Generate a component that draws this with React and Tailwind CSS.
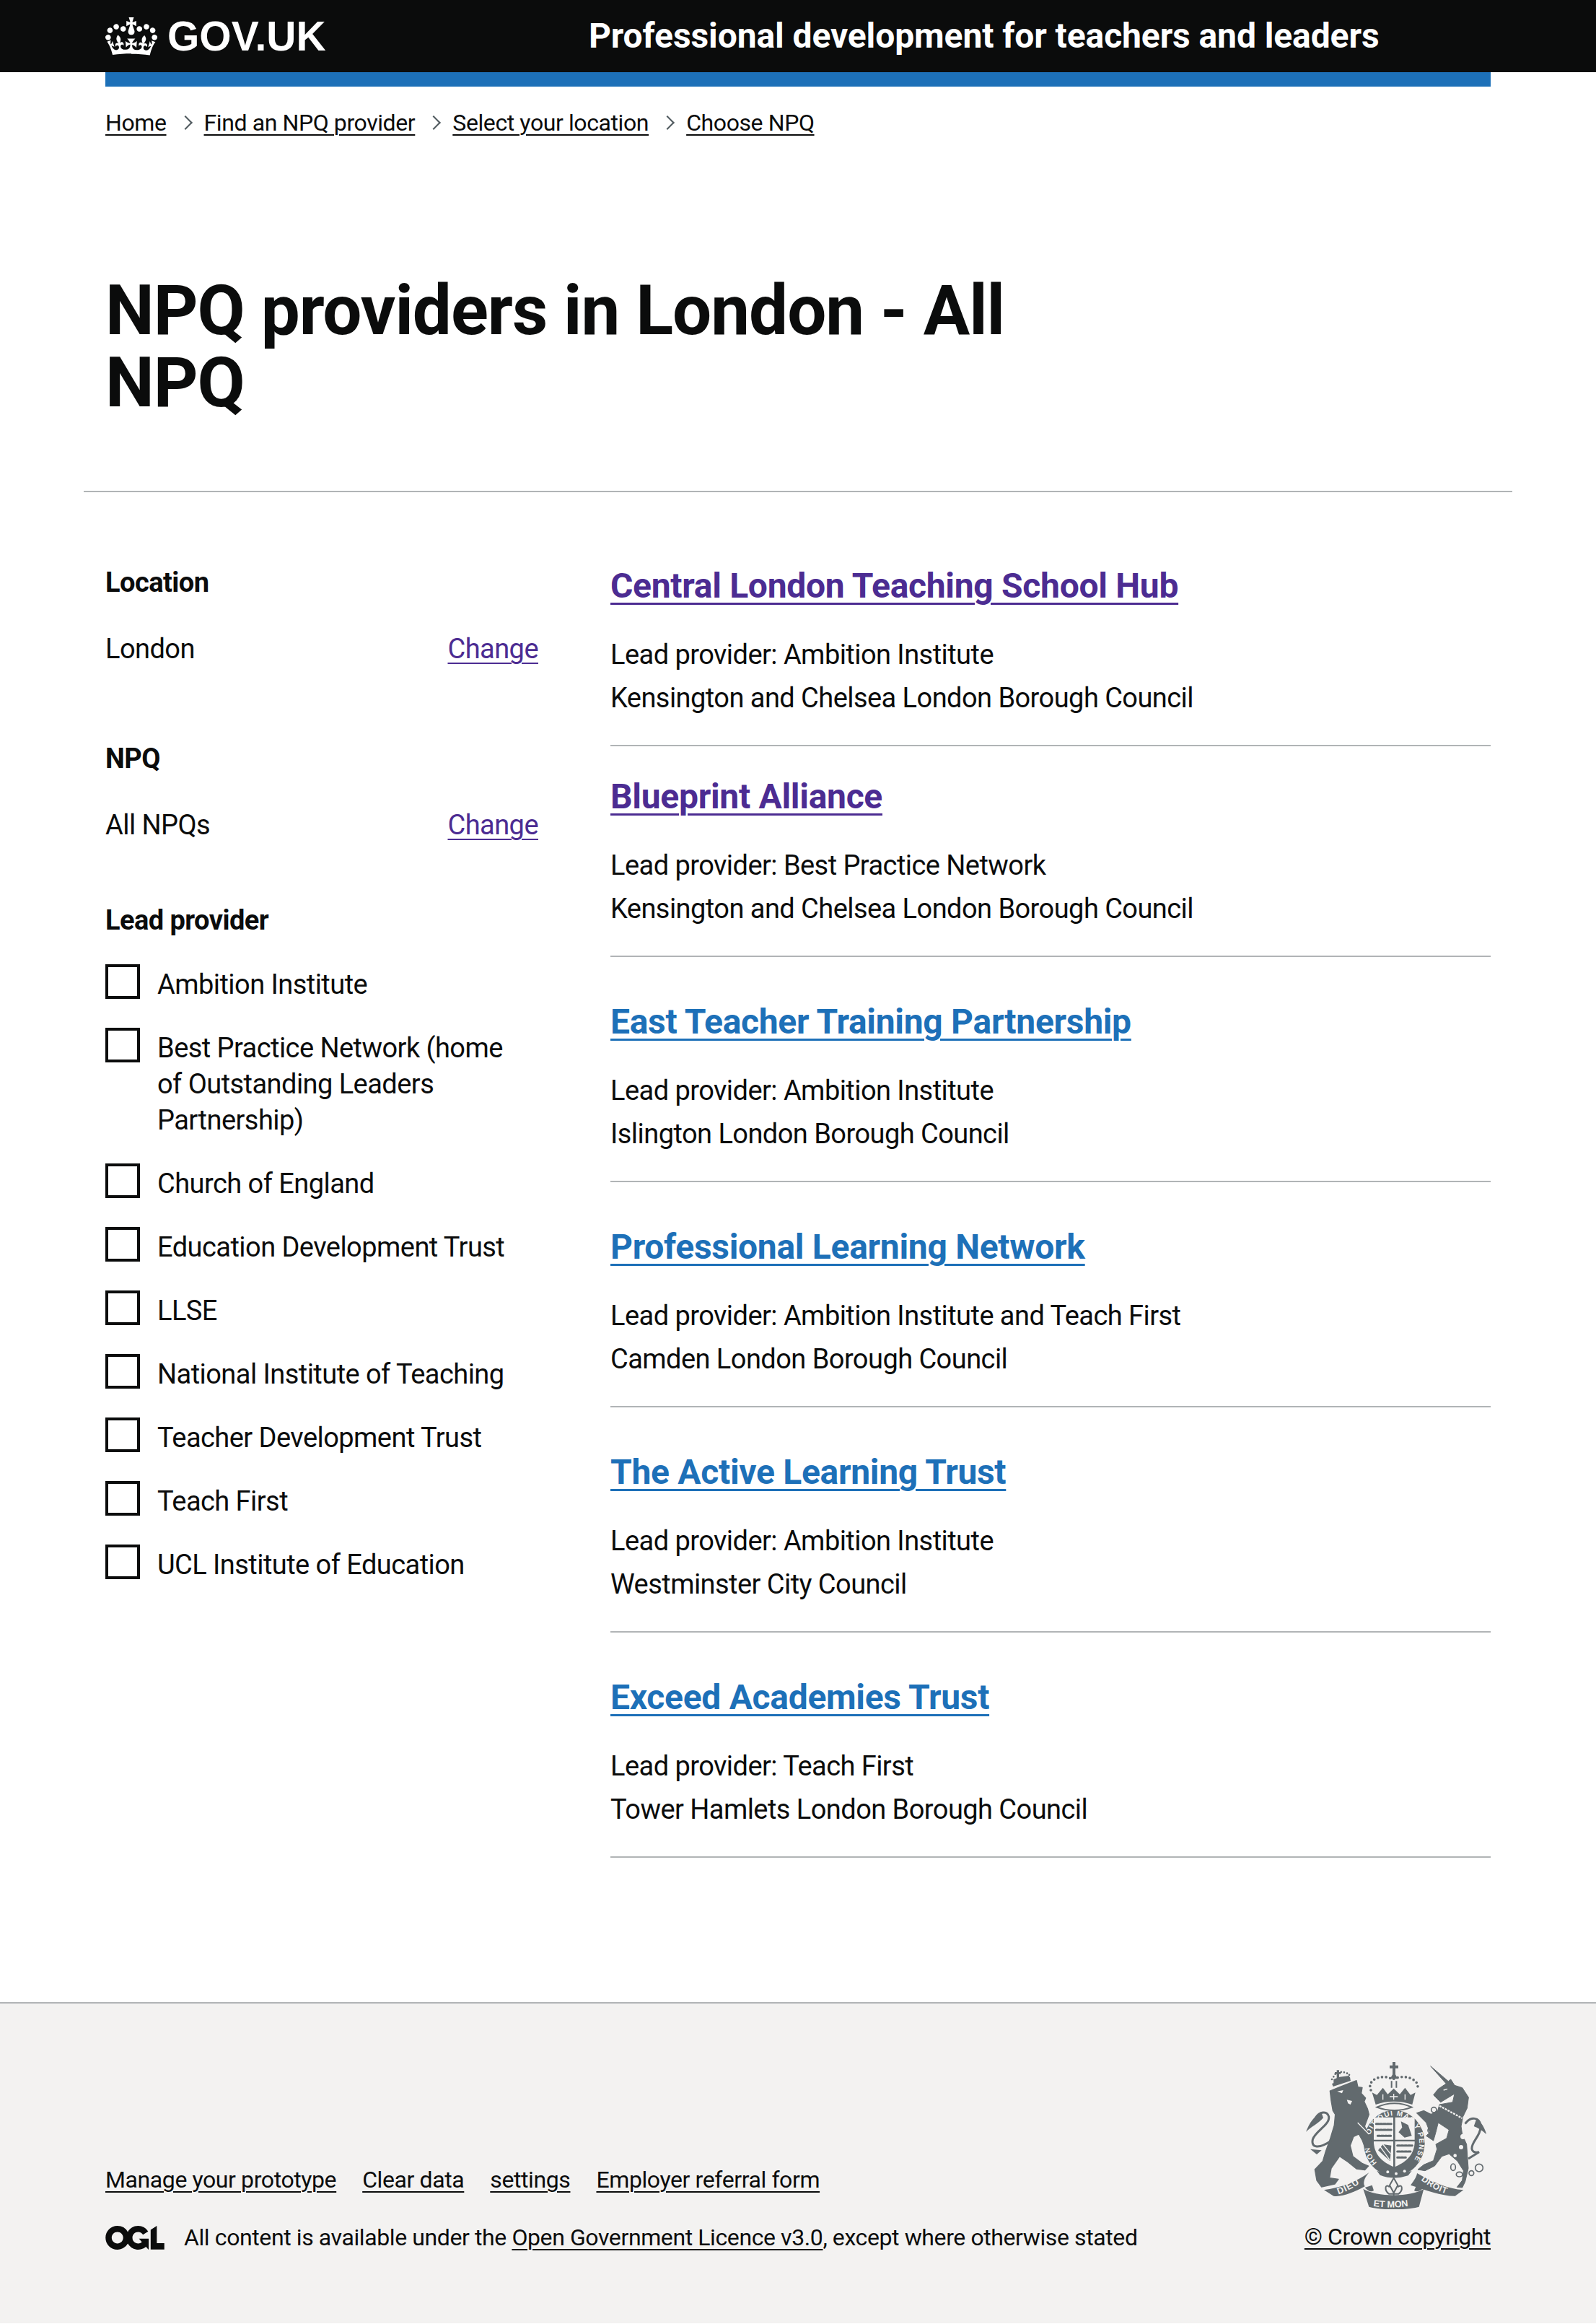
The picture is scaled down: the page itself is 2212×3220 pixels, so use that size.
const crownPath = "M25 30.2c3.5 1.5 7.7-.2 9.1-3.7 1.5-3.6-.2-7.8-3.9-9.2-3.6-1.4-7.6.3-9.1 3.9-1.4 3.5.3 7.5 3.9 9zM9 39.5c3.6 1.5 7.8-.2 9.2-3.7 1.5-3.6-.2-7.8-3.9-9.1-3.6-1.5-7.6.2-9.1 3.8-1.4 3.5.3 7.5 3.8 9zM4.4 57.2c3.5 1.5 7.7-.2 9.1-3.8 1.5-3.6-.2-7.7-3.9-9.1-3.5-1.5-7.6.3-9.1 3.8-1.4 3.5.3 7.6 3.9 9.1zm38.3-21.4c3.5 1.5 7.7-.2 9.1-3.8 1.5-3.6-.2-7.7-3.9-9.1-3.6-1.5-7.6.3-9.1 3.8-1.3 3.6.4 7.7 3.9 9.1zm64.4-5.6c-3.6 1.5-7.8-.2-9.1-3.7-1.5-3.6.2-7.8 3.8-9.2 3.6-1.4 7.7.3 9.2 3.9 1.3 3.5-.4 7.5-3.9 9zm15.9 9.3c-3.6 1.5-7.7-.2-9.1-3.7-1.5-3.6.2-7.8 3.7-9.1 3.6-1.5 7.7.2 9.2 3.8 1.5 3.5-.3 7.5-3.8 9zm4.7 17.7c-3.6 1.5-7.8-.2-9.2-3.8-1.5-3.6.2-7.7 3.9-9.1 3.6-1.5 7.7.3 9.2 3.8 1.3 3.5-.4 7.6-3.9 9.1zM89.3 35.8c-3.6 1.5-7.8-.2-9.2-3.8-1.4-3.6.2-7.7 3.9-9.1 3.6-1.5 7.7.3 9.2 3.8 1.4 3.6-.3 7.7-3.9 9.1zM69.7 17.7l8.9 4.7V9.3l-8.9 2.8c-.2-.3-.5-.6-.9-.9L72.4 0H59.6l3.6 11.2c-.3.3-.6.5-.9.9l-8.8-2.8v13.1l8.8-4.7c.3.3.6.7.9.9l-5 15.4v.1c-.2.8-.4 1.6-.4 2.4 0 4.1 3.1 7.5 7 8.1h.2c.3 0 .7.1 1 .1.4 0 .7 0 1-.1h.2c4-.6 7.1-4.1 7.1-8.1 0-.8-.1-1.7-.4-2.4V34l-5.1-15.4c.4-.2.7-.6 1-.9zM66 92.8c16.9 0 32.8 1.1 47.1 3.2 4-16.9 8.9-26.7 14-33.5l-9.6-3.4c1 4.9 1.1 7.2 0 10.2-1.5-1.4-3-4.3-4.2-8.7L108.6 76c2.8-2 5-3.2 7.5-3.3-4.4 9.4-10 11.9-13.6 11.2-4.3-.8-6.3-4.6-5.6-7.9 1-4.7 5.7-5.9 8-.5 4.3-8.7-3-11.4-7.6-8.8 7.1-7.2 7.9-13.5 2.1-21.1-8 6.1-8.1 12.3-4.5 20.8-4.7-5.4-12.1-2.5-9.5 6.2 3.4-5.2 7.9-2 7.2 3.1-.6 4.3-6.4 7.8-13.5 7.2-10.3-.9-10.9-8-11.2-13 2.5-.5 7.1 1.8 11 7.3L80.2 60c-4.1 4.4-8 5.3-12.3 5.4 1.4-4.4 8-11.6 8-11.6H55.5s6.4 7.2 7.9 11.6c-4.2-.1-8-1-12.3-5.4l1.4 16.4c3.9-5.5 8.5-7.7 10.9-7.3-.3 5-.7 12.1-11 13-7.2.6-12.9-2.9-13.5-7.2-.7-5 3.8-8.3 7.1-3.1 2.7-8.7-4.6-11.6-9.4-6.2 3.7-8.5 3.6-14.7-4.6-20.8-5.8 7.6-5 13.9 2.2 21.1-4.7-2.6-11.9.1-7.7 8.8 2.3-5.5 7.1-4.2 8.1.5.7 3.3-1.3 7.1-5.7 7.9-3.5.7-9-1.8-13.5-11.2 2.5.1 4.7 1.3 7.5 3.3l-4.7-15.4c-1.2 4.4-2.7 7.2-4.3 8.7-1.1-3-.9-5.3 0-10.2l-9.5 3.4c5 6.9 9.9 16.7 14 33.5 14.8-2.1 30.8-3.2 47.7-3.2z";
const oglPath = "M421.5 142.8V.1l-50.7 32.3v161.1h112.4v-50.7zm-122.3-9.6A47.12 47.12 0 0 1 221 97.8c0-26 21.1-47.1 47.1-47.1 16.7 0 31.4 8.7 39.7 21.8l42.7-27.2A97.63 97.63 0 0 0 268.1 0c-36.5 0-68.3 20.1-85.1 49.7A98 98 0 0 0 97.8 0C43.9 0 0 43.9 0 97.8s43.9 97.8 97.8 97.8c36.5 0 68.3-20.1 85.1-49.7a97.76 97.76 0 0 0 149.6 25.4l19.4 22.2h3v-87.8h-80l24.3 27.5zM97.8 145c-26 0-47.1-21.1-47.1-47.1s21.1-47.1 47.1-47.1 47.2 21 47.2 47S123.8 145 97.8 145";

const crumbs = ["Home", "Find an NPQ provider", "Select your location", "Choose NPQ"];

const providers = [
  { name: "Central London Teaching School Hub", lead: "Ambition Institute", council: "Kensington and Chelsea London Borough Council", visited: true },
  { name: "Blueprint Alliance", lead: "Best Practice Network", council: "Kensington and Chelsea London Borough Council", visited: true },
  { name: "East Teacher Training Partnership", lead: "Ambition Institute", council: "Islington London Borough Council" },
  { name: "Professional Learning Network", lead: "Ambition Institute and Teach First", council: "Camden London Borough Council" },
  { name: "The Active Learning Trust", lead: "Ambition Institute", council: "Westminster City Council" },
  { name: "Exceed Academies Trust", lead: "Teach First", council: "Tower Hamlets London Borough Council" },
];

const leadProviders = [
  "Ambition Institute",
  "Best Practice Network (home of Outstanding Leaders Partnership)",
  "Church of England",
  "Education Development Trust",
  "LLSE",
  "National Institute of Teaching",
  "Teacher Development Trust",
  "Teach First",
  "UCL Institute of Education",
];

function Crest() {
  const bg = "#f3f2f1";
  const ink = "#626a6e";
  const crestFont = "Liberation Sans, sans-serif";
  return (
    <svg viewBox="150 75 750 615" className="w-[250px] h-[205px] block" fill={ink}>
      <defs>
        <path id="ring" d="M445 497 A104 114 0 1 1 589 497" />
        <path id="dieu" d="M285 628 Q340 610 392 568" />
        <path id="droit" d="M628 568 Q680 612 748 630" />
        <path id="etmon" d="M430 677 Q515 690 605 672" />
      </defs>
      {/* shield and garter */}
      <ellipse cx="517" cy="415" rx="127" ry="137" />
      <text fontFamily={crestFont} fontWeight="700" fontSize="30" fill={bg}>
        <textPath href="#ring" textLength="505" lengthAdjust="spacing">HONI SOIT QUI MAL Y PENSE</textPath>
      </text>
      <path d="M432 308 H602 V415 C598 470 560 497 517 515 C474 497 436 470 432 415 Z" fill={bg} />
      <path d="M430 401 H513 V306 H521 V401 H604 V408 H521 V518 H513 V408 H430 Z" />
      <g fill="none" stroke={ink} strokeLinecap="round">
        <path d="M442 335 H505 M442 360 H505 M448 385 H505" strokeWidth="9" strokeDasharray="10 5" />
        <path d="M530 425 H592 M530 450 H585 M530 475 H565" strokeWidth="9" strokeDasharray="10 5" />
      </g>
      <path d="M545 325 L575 340 L590 385 L560 392 L535 370 L550 350 Z M470 420 L505 425 L500 490 L450 445 Z" />
      <path d="M455 425 L498 485 M470 420 L502 460" stroke={bg} strokeWidth="4" fill="none" />
      <path d="M445 530 Q517 560 590 530 L575 550 Q517 570 458 548 Z" />
      <circle cx="490" cy="535" r="6" fill={bg} /><circle cx="525" cy="542" r="6" fill={bg} /><circle cx="560" cy="532" r="6" fill={bg} />

      {/* lion */}
      <path d="M250 198 L300 178 L360 155 L366 182 L384 184 L380 208 L398 228 L392 242 L406 272 L412 296 L394 345 L418 395 L424 432 L396 436 L385 405 L370 378 L348 388 L334 425 L345 470 L385 500 L410 510 L395 527 L360 522 L320 490 L290 470 L255 520 L248 560 L285 565 L270 585 L215 597 L195 570 L187 525 L220 490 L232 450 L250 400 L268 340 L272 296 L262 280 L255 240 Z" strokeLinejoin="round" stroke={ink} strokeWidth="4" />
      <path d="M365 330 L412 378" stroke={bg} strokeWidth="4" fill="none" />
      <path d="M255 405 C205 440 170 435 178 400 C188 365 250 340 245 305 C238 278 205 285 190 310" fill="none" stroke={ink} strokeWidth="9" />
      <path d="M215 290 C185 300 165 330 150 368 C175 345 200 335 222 310 Z" />
      <path d="M168 440 L215 445 L195 462 Z" />
      <path d="M280 200 L305 195 L300 208 Z M320 235 L342 240 L335 255 L325 250 Z" fill={bg} />
      {/* lion crown */}
      <path d="M258 150 L272 128 L300 118 L330 128 L330 150" fill="none" stroke={ink} strokeWidth="8" strokeDasharray="0 13" strokeLinecap="round" />
      <path d="M278 112 H288 V120 H295 V128 H288 V150 H278 V128 H270 V120 H278 Z" />
      <path d="M265 150 L290 140 L330 135 L332 150 L265 172 Z" />
      <path d="M258 168 L333 144 L336 156 L263 180 Z" />

      {/* top crown */}
      <path d="M510 78 H522 V92 H534 V104 H522 V130 L532 148 H500 L510 130 V104 H498 V92 H510 Z" />
      <path d="M506 157 V185 M526 157 V185" stroke={ink} strokeWidth="6" fill="none" />
      <path d="M420 195 C400 150 470 125 510 150 C560 125 630 150 612 195" fill="none" stroke={ink} strokeWidth="11" strokeDasharray="0 17" strokeLinecap="round" />
      <path d="M425 205 L445 215 L470 185 L490 212 L515 188 L540 212 L562 185 L585 215 L605 205 L592 255 C545 238 485 238 440 255 Z" />
      <path d="M470 212 V235 M515 210 V235 M562 212 V235 M498 222 H532" stroke={bg} strokeWidth="4" fill="none" />
      <path d="M445 266 C490 244 545 244 590 266 C545 283 490 283 445 266 Z" fill="none" stroke={ink} strokeWidth="6" />

      {/* unicorn */}
      <path d="M668 95 L742 158 L752 150 L768 175 L800 185 L826 225 L820 270 L803 305 L795 345 L800 380 L818 420 L822 480 L825 520 L812 575 L800 600 L778 598 L800 570 L805 530 L780 490 L745 460 L715 470 L685 510 L645 530 L615 525 L640 505 L680 488 L695 440 L690 420 L735 395 L745 360 L700 330 L690 370 L680 405 L650 385 L665 370 L650 330 L610 290 L640 280 L670 295 L698 280 L705 255 L760 245 L768 210 L710 245 L680 215 L700 190 L733 168 Z" strokeLinejoin="round" stroke={ink} strokeWidth="3" />
      <path d="M705 260 L800 312" stroke={bg} strokeWidth="7" strokeDasharray="9 4" fill="none" />
      <path d="M722 195 L738 190" stroke={bg} strokeWidth="4" fill="none" />
      <path d="M812 335 C835 300 872 310 876 340 C880 385 835 410 840 440 C845 460 870 452 870 452 L825 480" fill="none" stroke={ink} strokeWidth="9" />
      <path d="M860 312 C880 330 895 355 900 378 C880 360 865 352 848 345 Z" />
      <circle cx="803" cy="388" r="11" fill={bg} /><circle cx="795" cy="432" r="9" fill={bg} /><circle cx="770" cy="467" r="7" fill={bg} />
      <g fill="none" stroke={ink} strokeWidth="5">
        <ellipse cx="762" cy="515" rx="10" ry="14" /><ellipse cx="788" cy="545" rx="13" ry="10" /><circle cx="838" cy="540" r="10" /><circle cx="870" cy="518" r="16" /><circle cx="682" cy="277" r="11" /><circle cx="668" cy="362" r="11" />
      </g>

      {/* motto */}
      <path d="M225 610 C300 600 360 575 412 538 C388 565 388 585 395 595 C350 620 300 640 265 635 Z" />
      <path d="M612 540 C680 580 740 605 805 610 L770 635 C710 635 650 610 585 590 C600 570 610 555 612 540 Z" />
      <path d="M388 605 C440 640 590 640 640 605 L620 680 C560 695 470 695 412 680 Z" />
      <path d="M395 600 C410 615 420 620 432 612 L425 590 Z M640 600 C625 615 610 620 600 612 L610 590 Z" />
      <path d="M515 560 L532 590 L515 622 L498 590 Z M498 598 C478 580 475 612 495 626 L535 626 C555 612 552 580 532 598 M515 622 V642" fill={bg} stroke={ink} strokeWidth="6" />
      <text fontFamily={crestFont} fontWeight="700" fontSize="38" fill={bg} letterSpacing="3"><textPath href="#dieu">DIEU</textPath></text>
      <text fontFamily={crestFont} fontWeight="700" fontSize="36" fill={bg} letterSpacing="2"><textPath href="#droit">DROIT</textPath></text>
      <text fontFamily={crestFont} fontWeight="700" fontSize="38" fill={bg}><textPath href="#etmon">ET MON</textPath></text>
    </svg>
  );
}

function SummaryBlock({ title, value }) {
  return (
    <div>
      <h2 className="font-bold mb-[38px]">{title}</h2>
      <div className="flex justify-between pt-[4px]">
        <span>{value}</span>
        <a className="underline decoration-2 underline-offset-[6px] text-[#4c2c92]">Change</a>
      </div>
    </div>
  );
}

function Provider({ name, lead, council, visited, spacing }) {
  return (
    <div className={`border-b-2 border-[#b1b4b6] pb-[40px] ${spacing}`}>
      <h3 className={`font-bold text-[48px] leading-[60px] mb-[40px] underline decoration-[3px] underline-offset-[7px] tracking-[-0.3px] ${visited ? "text-[#4c2c92]" : "text-[#1d70b8]"}`}>{name}</h3>
      <p>Lead provider: {lead}</p>
      <p className="mt-[10px]">{council}</p>
    </div>
  );
}

export default function App() {
  return (
    <div className="font-['Roboto','Liberation_Sans',sans-serif] text-[#0b0c0c] text-[38px] leading-[50px] tracking-[-0.55px] bg-white">
      <header className="bg-[#0b0c0c] h-[100px] px-[146px] flex items-center text-white">
        <a className="flex items-center w-[670px] shrink-0">
          <svg viewBox="0 0 132 97" className="w-[72px] h-[53px] mr-[14px]" fill="#fff"><path d={crownPath} fillRule="evenodd" /></svg>
          <span className="font-['Liberation_Sans'] font-bold text-[57px] leading-[60px] tracking-normal">GOV.UK</span>
        </a>
        <span className="font-bold text-[48px] leading-[60px] tracking-[-0.1px]">Professional development for teachers and leaders</span>
      </header>
      <div className="mx-[146px] h-[20px] bg-[#1d70b8]" />
      <nav className="mx-[146px] mt-[30px] flex items-center text-[32px] leading-[40px] tracking-[-0.4px]">
        {crumbs.map((c, i) => (
          <span key={c} className="flex items-center">
            {i > 0 && <span className="inline-block w-[14px] h-[14px] border-t-2 border-r-2 border-[#505a5f] rotate-45 mx-[19px]" />}
            <a className="underline decoration-2 underline-offset-[5px]">{c}</a>
          </span>
        ))}
      </nav>
      <h1 className="mx-[146px] mt-[190px] max-w-[1280px] font-bold text-[96px] leading-[100px] tracking-[-1px]">NPQ providers in London - All NPQ</h1>
      <hr className="mx-[116px] mt-[100px] border-0 h-[2px] bg-[#b1b4b6]" />
      <main className="mx-[146px] mt-[100px] flex pb-[200px]">
        <aside className="w-[600px] shrink-0 mr-[100px]">
          <SummaryBlock title="Location" value="London" />
          <div className="mt-[102px]"><SummaryBlock title="NPQ" value="All NPQs" /></div>
          <h2 className="font-bold mt-[82px] mb-[36px]">Lead provider</h2>
          {leadProviders.map((p) => (
            <label key={p} className="flex mb-[35px]">
              <span className="w-[48px] h-[48px] border-[4px] border-[#0b0c0c] shrink-0 mr-[24px]" />
              <span className="mt-[3px] max-w-[510px]">{p}</span>
            </label>
          ))}
        </aside>
        <section className="flex-1">
          {providers.map((p, i) => <Provider key={p.name} {...p} spacing={i === 0 ? "" : i === 1 ? "mt-[40px]" : "mt-[60px]"} />)}
        </section>
      </main>
      <footer className="bg-[#f3f2f1] border-t-2 border-[#b1b4b6] h-[445px] px-[146px] pt-[80px] flex justify-between text-[32px] leading-[40px] tracking-[-0.4px]">
        <div className="pt-[144px]">
          <div className="flex gap-[36px]">
            {["Manage your prototype", "Clear data", "settings", "Employer referral form"].map((l) => (
              <a key={l} className="underline decoration-2 underline-offset-[5px]">{l}</a>
            ))}
          </div>
          <div className="flex items-center mt-[40px]">
            <svg viewBox="0 0 483.2 195.7" className="w-[82px] h-[33px] mr-[27px]" fill="#0b0c0c"><path d={oglPath} /></svg>
            <span>All content is available under the <a className="underline decoration-2 underline-offset-[5px]">Open Government Licence v3.0</a>, except where otherwise stated</span>
          </div>
        </div>
        <div className="flex flex-col items-end">
          <div className="mr-[6px]"><Crest /></div>
          <a className="underline decoration-2 underline-offset-[5px] mt-[18px]">© Crown copyright</a>
        </div>
      </footer>
    </div>
  );
}
